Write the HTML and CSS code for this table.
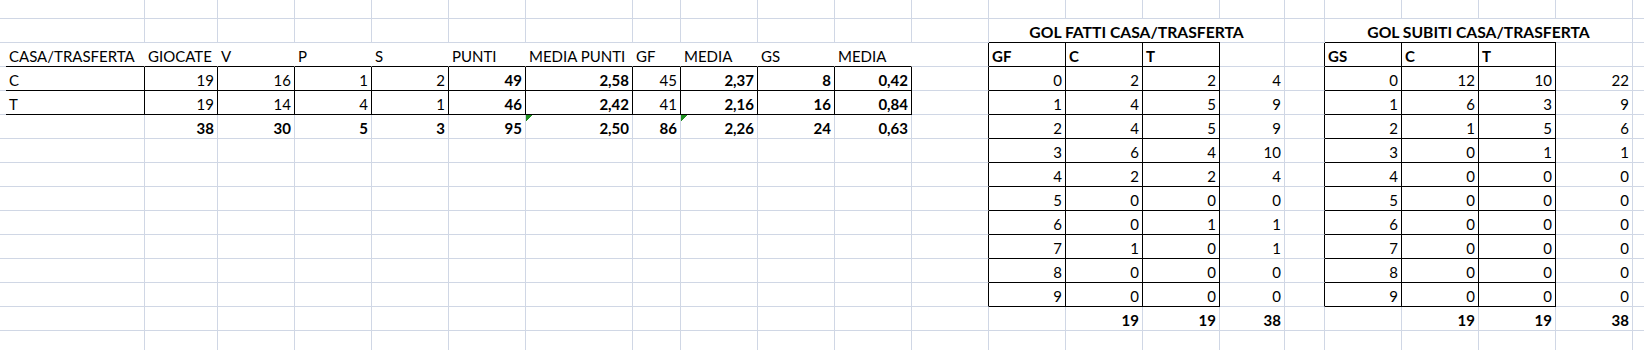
FILE: index.html
```html
<!DOCTYPE html>
<html lang="it">
<head>
<meta charset="utf-8">
<title>Statistiche casa/trasferta</title>
<link rel="stylesheet" href="styles.css">
</head>
<body>
<div class="sheet">
  <!-- row 0 -->
  <div></div><div></div><div></div><div></div><div></div><div></div><div></div><div></div><div></div><div></div><div></div><div></div><div></div><div></div><div></div><div></div><div></div><div></div><div></div><div></div><div></div><div></div><div></div>
  <!-- row 1: titles -->
  <div></div><div></div><div></div><div></div><div></div><div></div><div></div><div></div><div></div><div></div><div></div><div></div><div></div>
  <div class="ttl">GOL FATTI CASA/TRASFERTA</div>
  <div></div>
  <div class="ttl">GOL SUBITI CASA/TRASFERTA</div>
  <div></div>
  <!-- row 2: headers -->
  <div class="nr"></div>
  <div class="nr kb">CASA/TRASFERTA</div>
  <div class="nr kb">GIOCATE</div>
  <div class="nr kb">V</div>
  <div class="nr kb">P</div>
  <div class="nr kb">S</div>
  <div class="nr kb">PUNTI</div>
  <div class="nr kb">MEDIA PUNTI</div>
  <div class="nr kb">GF</div>
  <div class="nr kb">MEDIA</div>
  <div class="nr kb">GS</div>
  <div class="nr kb">MEDIA</div>
  <div class="kr"></div>
  <div class="k b">GF</div><div class="k b">C</div><div class="k b">T</div>
  <div></div>
  <div class="kr"></div>
  <div class="k b">GS</div><div class="k b">C</div><div class="k b">T</div>
  <div></div><div></div>
  <!-- row 3: C -->
  <div class="kr"></div>
  <div class="k">C</div>
  <div class="k n">19</div><div class="k n">16</div><div class="k n">1</div><div class="k n">2</div>
  <div class="k n b">49</div><div class="k n b">2,58</div><div class="k n">45</div><div class="k n b">2,37</div><div class="k n b">8</div><div class="k n b">0,42</div>
  <div class="kr"></div>
  <div class="k n">0</div><div class="k n">2</div><div class="k n">2</div><div class="n">4</div>
  <div class="kr"></div>
  <div class="k n">0</div><div class="k n">12</div><div class="k n">10</div><div class="n">22</div>
  <div></div>
  <!-- row 4: T -->
  <div class="kr"></div>
  <div class="k">T</div>
  <div class="k n">19</div><div class="k n">14</div><div class="k n">4</div><div class="k n">1</div>
  <div class="k n b">46</div><div class="k n b">2,42</div><div class="k n">41</div><div class="k n b">2,16</div><div class="k n b">16</div><div class="k n b">0,84</div>
  <div class="kr"></div>
  <div class="k n">1</div><div class="k n">4</div><div class="k n">5</div><div class="n">9</div>
  <div class="kr"></div>
  <div class="k n">1</div><div class="k n">6</div><div class="k n">3</div><div class="n">9</div>
  <div></div>
  <!-- row 5: totals -->
  <div></div><div></div>
  <div class="n b">38</div><div class="n b">30</div><div class="n b">5</div><div class="n b">3</div>
  <div class="n b">95</div><div class="n b tri">2,50</div><div class="n b">86</div><div class="n b tri">2,26</div><div class="n b">24</div><div class="n b">0,63</div>
  <div class="kr"></div>
  <div class="k n">2</div><div class="k n">4</div><div class="k n">5</div><div class="n">9</div>
  <div class="kr"></div>
  <div class="k n">2</div><div class="k n">1</div><div class="k n">5</div><div class="n">6</div>
  <div></div>
  <!-- row 6 -->
  <div></div><div></div><div></div><div></div><div></div><div></div><div></div><div></div><div></div><div></div><div></div><div></div>
  <div class="kr"></div>
  <div class="k n">3</div><div class="k n">6</div><div class="k n">4</div><div class="n">10</div>
  <div class="kr"></div>
  <div class="k n">3</div><div class="k n">0</div><div class="k n">1</div><div class="n">1</div>
  <div></div>
  <!-- row 7 -->
  <div></div><div></div><div></div><div></div><div></div><div></div><div></div><div></div><div></div><div></div><div></div><div></div>
  <div class="kr"></div>
  <div class="k n">4</div><div class="k n">2</div><div class="k n">2</div><div class="n">4</div>
  <div class="kr"></div>
  <div class="k n">4</div><div class="k n">0</div><div class="k n">0</div><div class="n">0</div>
  <div></div>
  <!-- row 8 -->
  <div></div><div></div><div></div><div></div><div></div><div></div><div></div><div></div><div></div><div></div><div></div><div></div>
  <div class="kr"></div>
  <div class="k n">5</div><div class="k n">0</div><div class="k n">0</div><div class="n">0</div>
  <div class="kr"></div>
  <div class="k n">5</div><div class="k n">0</div><div class="k n">0</div><div class="n">0</div>
  <div></div>
  <!-- row 9 -->
  <div></div><div></div><div></div><div></div><div></div><div></div><div></div><div></div><div></div><div></div><div></div><div></div>
  <div class="kr"></div>
  <div class="k n">6</div><div class="k n">0</div><div class="k n">1</div><div class="n">1</div>
  <div class="kr"></div>
  <div class="k n">6</div><div class="k n">0</div><div class="k n">0</div><div class="n">0</div>
  <div></div>
  <!-- row 10 -->
  <div></div><div></div><div></div><div></div><div></div><div></div><div></div><div></div><div></div><div></div><div></div><div></div>
  <div class="kr"></div>
  <div class="k n">7</div><div class="k n">1</div><div class="k n">0</div><div class="n">1</div>
  <div class="kr"></div>
  <div class="k n">7</div><div class="k n">0</div><div class="k n">0</div><div class="n">0</div>
  <div></div>
  <!-- row 11 -->
  <div></div><div></div><div></div><div></div><div></div><div></div><div></div><div></div><div></div><div></div><div></div><div></div>
  <div class="kr"></div>
  <div class="k n">8</div><div class="k n">0</div><div class="k n">0</div><div class="n">0</div>
  <div class="kr"></div>
  <div class="k n">8</div><div class="k n">0</div><div class="k n">0</div><div class="n">0</div>
  <div></div>
  <!-- row 12 -->
  <div></div><div></div><div></div><div></div><div></div><div></div><div></div><div></div><div></div><div></div><div></div><div></div>
  <div class="kr"></div>
  <div class="k n">9</div><div class="k n">0</div><div class="k n">0</div><div class="n">0</div>
  <div class="kr"></div>
  <div class="k n">9</div><div class="k n">0</div><div class="k n">0</div><div class="n">0</div>
  <div></div>
  <!-- row 13: right totals -->
  <div></div><div></div><div></div><div></div><div></div><div></div><div></div><div></div><div></div><div></div><div></div><div></div><div></div><div></div>
  <div class="n b">19</div><div class="n b">19</div><div class="n b">38</div>
  <div></div><div></div>
  <div class="n b">19</div><div class="n b">19</div><div class="n b">38</div>
  <div></div>
  <!-- row 14 -->
  <div></div><div></div><div></div><div></div><div></div><div></div><div></div><div></div><div></div><div></div><div></div><div></div><div></div><div></div><div></div><div></div><div></div><div></div><div></div><div></div><div></div><div></div><div></div>
</div>
</body>
</html>
```
FILE: styles.css
```css
html, body {
  margin: 0;
  padding: 0;
  background: #fff;
  overflow: hidden;
}

.sheet {
  display: grid;
  grid-template-columns: 6px 139px 73px 77px 77px 77px 77px 107px 48px 77px 77px 77px 77px 77px 77px 77px 65px 40px 77px 77px 77px 77px 12px;
  grid-template-rows: 19px repeat(14, 24px);
  width: 1645px;
  font-family: Lato, "Liberation Sans", sans-serif;
  font-size: 15px;
  color: #000;
}

.sheet > div {
  box-sizing: border-box;
  border-right: 1px solid #d0d7e5;
  border-bottom: 1px solid #d0d7e5;
  padding: 3px 3px 0 3px;
  line-height: 20px;
  white-space: nowrap;
  overflow: visible;
  background: #fff;
}

.sheet > .n { text-align: right; }
.sheet > .b { font-weight: 700; }
.sheet > .nr { border-right-color: #fff; }
.sheet > .kr { border-right-color: #000; }
.sheet > .kb { border-bottom-color: #000; }
.sheet > .k { border-right-color: #000; border-bottom-color: #000; }

.sheet > .ttl {
  grid-column: span 4;
  text-align: center;
  font-weight: 700;
  font-size: 15.7px;
  border-bottom-color: transparent;
  background:
    linear-gradient(#000, #000) left bottom / 231px 1px no-repeat,
    linear-gradient(#d0d7e5, #d0d7e5) left bottom / 100% 1px no-repeat,
    #fff;
  background-origin: border-box;
  background-clip: border-box;
}

.sheet > .tri {
  background:
    linear-gradient(135deg, #1f8f1f 0 50%, transparent 50%) left top / 6px 6px no-repeat,
    #fff;
}
```
